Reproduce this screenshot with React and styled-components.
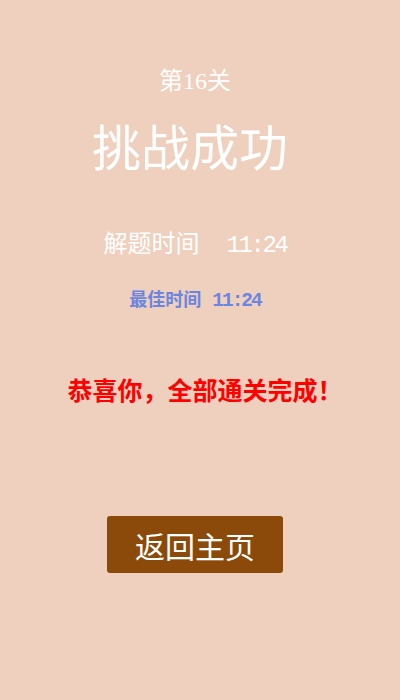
import React from "react";
import styled, { createGlobalStyle } from "styled-components";

const Global = createGlobalStyle`
  html, body { margin: 0; padding: 0; background: #efcfbd; }
  body { font-family: "Liberation Serif", "Noto Sans CJK SC", serif; }
`;

const Page = styled.div`
  width: 390px;
  height: 700px;
  background: #efcfbd;
  display: flex;
  flex-direction: column;
  align-items: center;
  padding-top: 65px;
  box-sizing: border-box;
`;

const Level = styled.div`
  color: #fff;
  font-size: 24px;
  line-height: 32px;
`;

const Title = styled.h1`
  margin: 21px 0 0;
  padding-right: 10px;
  color: #fff;
  font-size: 49px;
  font-weight: normal;
  line-height: 64px;
`;

const TimeRow = styled.div`
  margin-top: 46px;
  color: #fff;
  font-size: 24px;
  line-height: 32px;
  white-space: nowrap;
`;

const Clock = styled.span`
  margin-left: ${(p) => p.$gap}px;
  font-family: "Liberation Mono", monospace;
  font-size: ${(p) => p.$size || "1em"};
  letter-spacing: -0.1em;
  font-weight: ${(p) => (p.$bold ? "bold" : "normal")};
`;

const Best = styled.div`
  margin-top: 26px;
  color: #6b86e0;
  font-size: 18px;
  font-weight: bold;
  line-height: 24px;
  white-space: nowrap;
`;

const Congrats = styled.div`
  margin-top: 63px;
  padding-left: 20px;
  color: #ff0000;
  font-size: 25px;
  font-weight: bold;
  line-height: 32px;
`;

const HomeButton = styled.button`
  margin-top: 108px;
  width: 176px;
  height: 57px;
  border: none;
  border-radius: 3px;
  background: #8b4a09;
  color: #fff;
  font-family: "Liberation Serif", "Noto Sans CJK SC", serif;
  font-size: 30px;
  cursor: pointer;
`;

export default function App() {
  return (
    <Page>
      <Global />
      <Level>第16关</Level>
      <Title>挑战成功</Title>
      <TimeRow>
        解题时间
        <Clock $gap={27}>11:24</Clock>
      </TimeRow>
      <Best>
        最佳时间
        <Clock $gap={11} $bold $size="1.08em">11:24</Clock>
      </Best>
      <Congrats>恭喜你，全部通关完成！</Congrats>
      <HomeButton>返回主页</HomeButton>
    </Page>
  );
}
